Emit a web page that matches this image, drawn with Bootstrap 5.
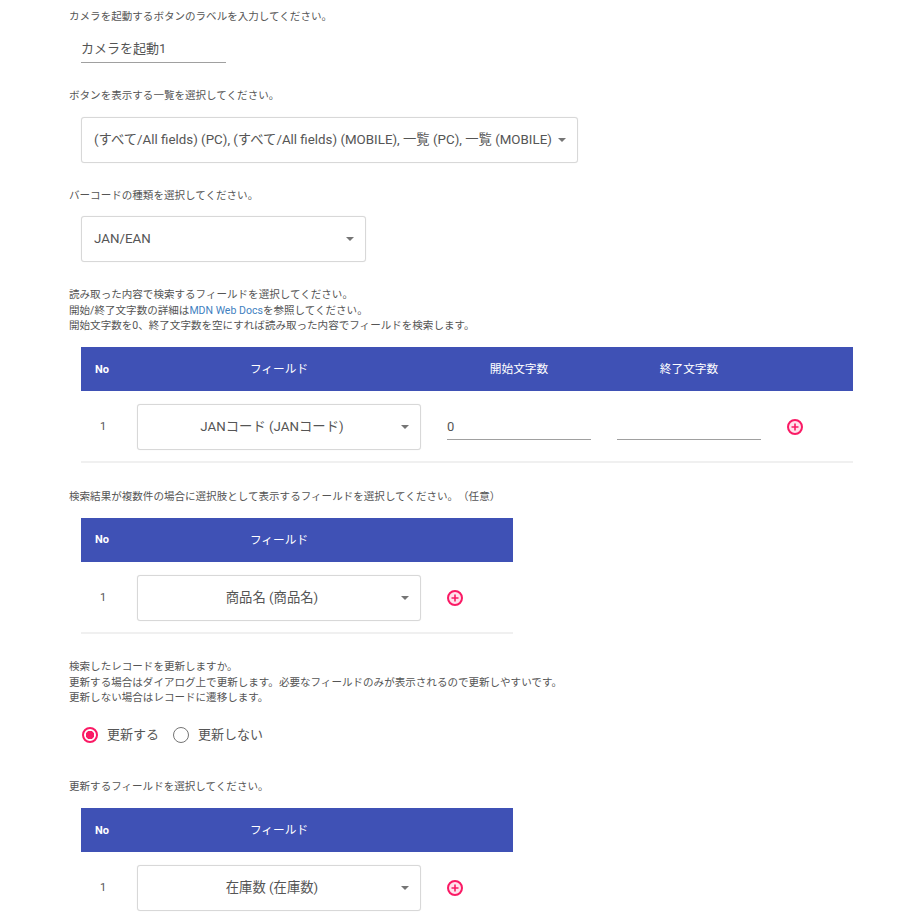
<!DOCTYPE html>
<html lang="ja">
<head>
    <meta charset="UTF-8">
    <title>カメラ設定</title>
    <link href="https://cdn.jsdelivr.net/npm/bootstrap@5.3.0/dist/css/bootstrap.min.css" rel="stylesheet">
    <style>
        html, body {
            height: 920px;
            overflow: hidden;
        }
        body {
            font-family: Roboto, "Noto Sans CJK JP", sans-serif;
            color: #555;
            background: #fff;
            padding: 9.4px 0 0 69px;
            text-spacing-trim: space-all;
        }
        .setting-label {
            font-size: 10.56px;
            line-height: 15.6px;
            color: #555;
            margin: 0;
        }
        .setting-label a {
            color: #3f7fbf;
            text-decoration: none;
        }
        .setting-body {
            margin-left: 12px;
        }
        .line-input {
            display: block;
            border: 0;
            border-bottom: 1px solid #a0a0a0;
            border-radius: 0;
            padding: 0;
            height: 26px;
            font-size: 13px;
            color: #555;
            background: transparent;
            outline: 0;
        }
        .w-label {
            width: 145px;
            padding-bottom: 4px;
        }
        .w-cell { width: 144px; }
        .drop-select.form-select {
            height: 46px;
            font-size: 13.33px;
            color: #555;
            border: 1px solid #d8d8d8;
            border-radius: 3px;
            padding: 0 20px 0 12px;
            box-shadow: 0 0 1px rgba(0, 0, 0, .12);
            background-image: url("data:image/svg+xml,%3Csvg xmlns='http://www.w3.org/2000/svg' width='8' height='4'%3E%3Cpath d='M0 0h8L4 4z' fill='%23757575'/%3E%3C/svg%3E");
            background-size: 8px 4px;
            background-position: right 11px center;
        }
        .w-list { width: 497px; }
        .w-type { width: 285px; }
        .drop-select.form-select.w-field {
            width: 284px;
            text-align: center;
            padding-right: 26px;
        }
        .field-table.table {
            table-layout: fixed;
            width: auto;
            margin: 0;
            border-collapse: collapse;
        }
        .field-table th {
            height: 44px;
            padding: 2px 0 0;
            background: #3f51b5;
            --bs-table-bg: #3f51b5;
            --bs-table-color: #fff;
            color: #fff;
            font-size: 11.7px;
            font-weight: 400;
            text-align: center;
            vertical-align: middle;
            border-bottom: 0;
        }
        .field-table th.col-no {
            font-size: 11px;
            font-weight: 700;
            text-align: left;
            padding-left: 14px;
        }
        .field-table th.col-field { padding-right: 13px; }
        .field-table td {
            padding: 13.5px 0 11px;
            vertical-align: middle;
            border-bottom: 2px solid #f0f0f0;
            color: #555;
            font-size: 11px;
        }
        .field-table td.col-no { padding-left: 19px; }
        .col-no { width: 56px; }
        .col-field { width: 297px; }
        .col-num { width: 170px; }
        .col-add { width: 79px; }
        .field-table td.col-num { padding-left: 13px; }
        .field-table td.col-add { padding-left: 13px; }
        .add-btn {
            display: block;
            width: 16px;
            height: 16px;
        }
        .radio-row {
            height: 16px;
            margin-left: 13px;
            margin-top: 21px;
            font-size: 13px;
            color: #555;
        }
        .radio-choice {
            gap: 9px;
            margin-right: 14px;
        }
        .radio-row .form-check-input {
            width: 16px;
            height: 16px;
            margin: 0;
            border: 1.6px solid #757575;
            background: #fff;
            box-shadow: none;
        }
        .radio-row .form-check-input:checked {
            border: 2px solid #fa1a65;
            background: radial-gradient(circle, #fa1a65 0 4px, #fff 4.5px);
        }
        .gap-a { margin-top: 25px; }
        .gap-b { margin-top: 13px; }
        .gap-input { margin-top: 12px; }
        .gap-table { margin-top: 25.5px; }
        .gap-text { margin-top: 25px; }
        .gap-update { margin-top: 36.4px; }
    </style>
</head>
<body>
    <!-- ボタンラベル -->
    <p class="setting-label">カメラを起動するボタンのラベルを入力してください。</p>
    <div class="setting-body gap-input">
        <input type="text" class="line-input w-label" value="カメラを起動1">
    </div>

    <!-- 一覧 -->
    <p class="setting-label gap-a">ボタンを表示する一覧を選択してください。</p>
    <div class="setting-body gap-b">
        <select class="form-select drop-select w-list">
            <option>(すべて/All fields) (PC), (すべて/All fields) (MOBILE), 一覧 (PC), 一覧 (MOBILE)</option>
        </select>
    </div>

    <!-- バーコード -->
    <p class="setting-label gap-a">バーコードの種類を選択してください。</p>
    <div class="setting-body gap-b">
        <select class="form-select drop-select w-type">
            <option>JAN/EAN</option>
        </select>
    </div>

    <!-- 検索フィールド -->
    <p class="setting-label gap-a">読み取った内容で検索するフィールドを選択してください。<br>開始/終了文字数の詳細は<a href="#">MDN Web Docs</a>を参照してください。<br>開始文字数を0、終了文字数を空にすれば読み取った内容でフィールドを検索します。</p>
    <div class="setting-body gap-b">
        <table class="table field-table">
            <thead>
                <tr>
                    <th class="col-no">No</th>
                    <th class="col-field">フィールド</th>
                    <th class="col-num">開始文字数</th>
                    <th class="col-num">終了文字数</th>
                    <th class="col-add"></th>
                </tr>
            </thead>
            <tbody>
                <tr>
                    <td class="col-no">1</td>
                    <td class="col-field"><select class="form-select drop-select w-field"><option>JANコード (JANコード)</option></select></td>
                    <td class="col-num"><input type="text" class="line-input w-cell" value="0"></td>
                    <td class="col-num"><input type="text" class="line-input w-cell"></td>
                    <td class="col-add"><svg class="add-btn" viewBox="0 0 16 16"><circle cx="8" cy="8" r="7" fill="#ffe3ec" stroke="#fa1a65" stroke-width="2"/><path d="M8 4.5v7M4.5 8h7" stroke="#fa1a65" stroke-width="1.6"/></svg></td>
                </tr>
            </tbody>
        </table>
    </div>

    <!-- 選択肢フィールド -->
    <p class="setting-label gap-table">検索結果が複数件の場合に選択肢として表示するフィールドを選択してください。（任意）</p>
    <div class="setting-body gap-b">
        <table class="table field-table">
            <thead>
                <tr>
                    <th class="col-no">No</th>
                    <th class="col-field">フィールド</th>
                    <th class="col-add"></th>
                </tr>
            </thead>
            <tbody>
                <tr>
                    <td class="col-no">1</td>
                    <td class="col-field"><select class="form-select drop-select w-field"><option>商品名 (商品名)</option></select></td>
                    <td class="col-add"><svg class="add-btn" viewBox="0 0 16 16"><circle cx="8" cy="8" r="7" fill="#ffe3ec" stroke="#fa1a65" stroke-width="2"/><path d="M8 4.5v7M4.5 8h7" stroke="#fa1a65" stroke-width="1.6"/></svg></td>
                </tr>
            </tbody>
        </table>
    </div>

    <!-- 更新の有無 -->
    <p class="setting-label gap-text">検索したレコードを更新しますか。<br>更新する場合はダイアログ上で更新します。必要なフィールドのみが表示されるので更新しやすいです。<br>更新しない場合はレコードに遷移します。</p>
    <div class="radio-row d-flex align-items-center">
        <label class="radio-choice d-flex align-items-center">
            <input class="form-check-input" type="radio" name="updateMode" checked>更新する
        </label>
        <label class="radio-choice d-flex align-items-center">
            <input class="form-check-input" type="radio" name="updateMode">更新しない
        </label>
    </div>

    <!-- 更新フィールド -->
    <p class="setting-label gap-update">更新するフィールドを選択してください。</p>
    <div class="setting-body gap-b">
        <table class="table field-table">
            <thead>
                <tr>
                    <th class="col-no">No</th>
                    <th class="col-field">フィールド</th>
                    <th class="col-add"></th>
                </tr>
            </thead>
            <tbody>
                <tr>
                    <td class="col-no">1</td>
                    <td class="col-field"><select class="form-select drop-select w-field"><option>在庫数 (在庫数)</option></select></td>
                    <td class="col-add"><svg class="add-btn" viewBox="0 0 16 16"><circle cx="8" cy="8" r="7" fill="#ffe3ec" stroke="#fa1a65" stroke-width="2"/><path d="M8 4.5v7M4.5 8h7" stroke="#fa1a65" stroke-width="1.6"/></svg></td>
                </tr>
            </tbody>
        </table>
    </div>

    <script src="https://cdn.jsdelivr.net/npm/bootstrap@5.3.0/dist/js/bootstrap.bundle.min.js"></script>
</body>
</html>
